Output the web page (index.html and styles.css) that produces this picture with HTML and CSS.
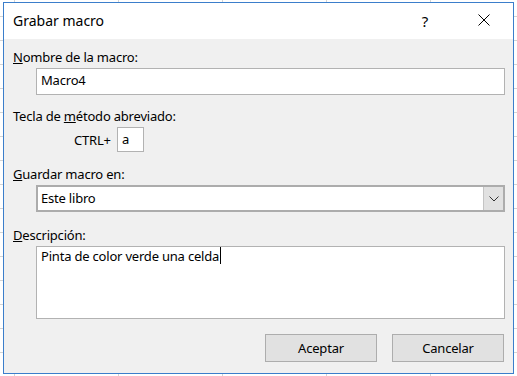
FILE: index.html
```html
<!DOCTYPE html>
<html lang="es">
<head>
  <meta charset="UTF-8">
  <title>Grabar macro</title>
  <link rel="stylesheet" href="styles.css">
</head>
<body>
<div class="dialog">
  <div class="titlebar">
    <span class="title">Grabar macro</span>
    <span class="help">?</span>
    <span class="close">
      <svg width="12" height="12" viewBox="0 0 12 12"><path d="M0.5 0.5 L11.5 11.5 M11.5 0.5 L0.5 11.5" stroke="#000" stroke-width="1" fill="none"/></svg>
    </span>
  </div>

  <div class="content">
    <div class="label lbl-name"><u>N</u>ombre de la macro:</div>
    <div class="field field-name">Macro4</div>

    <div class="label lbl-key">Tecla de <u>m</u>étodo abreviado:</div>
    <div class="shortcut">
      <span class="ctrl">CTRL+</span>
      <div class="field key">a</div>
    </div>

    <div class="label lbl-store"><u>G</u>uardar macro en:</div>
    <div class="combo">
      <span class="combo-value">Este libro</span>
      <span class="combo-btn">
        <svg width="10" height="6" viewBox="0 0 10 6"><polyline points="0.5,0.5 5,5 9.5,0.5" stroke="#333" stroke-width="1" fill="none"/></svg>
      </span>
    </div>

    <div class="label lbl-desc"><u>D</u>escripción:</div>
    <div class="field memo">Pinta de color verde una celda<span class="caret"></span></div>

    <div class="actions">
      <button class="btn">Aceptar</button>
      <button class="btn">Cancelar</button>
    </div>
  </div>
</div>
</body>
</html>
```

FILE: styles.css
```css
* {
  box-sizing: border-box;
}
html, body {
  margin: 0;
  padding: 0;
  width: 517px;
  height: 376px;
  overflow: hidden;
}
body {
  font-family: 'Noto Sans', 'Open Sans', sans-serif;
  font-size: 13px;
  letter-spacing: -0.2px;
  color: #000;
  background-color: #fff;
  background-image:
    linear-gradient(to right, #d4d4d4 1px, transparent 1px),
    linear-gradient(to bottom, #d4d4d4 1px, transparent 1px);
  background-size: 104px 100%, 100% 24px;
  background-position: 14px 0, 0 16px;
}
.dialog {
  margin: 2px 0 0 3px;
  width: 511px;
  height: 372px;
  border: 1px solid #3b7ecb;
  background: #f0f0f0;
  display: flex;
  flex-direction: column;
}
.titlebar {
  height: 36px;
  background: #fff;
  display: flex;
  align-items: center;
  padding-bottom: 1px;
}
.title {
  flex: 1;
  padding-left: 9px;
  font-size: 14px;
  letter-spacing: 0;
}
.help {
  font-size: 15px;
  margin-right: 50px;
}
.close {
  display: flex;
  margin-right: 23px;
  margin-top: -1px;
}
.content {
  flex: 1;
  padding: 9px 8px 0 9px;
  display: flex;
  flex-direction: column;
}
.label {
  line-height: 18px;
}
.label u {
  text-decoration-thickness: 1px;
}
.field {
  background: #fff;
  border: 1px solid #b2b2b2;
  line-height: 23px;
  padding: 0 0 2px 4px;
}
.field-name {
  margin: 2px 0 0 23px;
  height: 27px;
}
.lbl-key {
  margin-top: 12px;
}
.shortcut {
  display: flex;
  align-items: center;
  height: 25px;
  margin-top: 2px;
  padding-left: 61px;
}
.ctrl {
  width: 43px;
}
.key {
  width: 27px;
  height: 25px;
  line-height: 22px;
  padding-left: 4px;
}
.lbl-store {
  margin-top: 13px;
}
.combo {
  margin: 2px 0 0 23px;
  height: 27px;
  border: 2px solid #acacac;
  background: #fff;
  display: flex;
}
.combo-value {
  flex: 1;
  line-height: 22px;
  padding-left: 3px;
}
.combo-btn {
  width: 20px;
  background: #e1e1e1;
  border-left: 1px solid #c4c4c4;
  display: flex;
  align-items: center;
  justify-content: center;
}
.lbl-desc {
  margin-top: 14px;
}
.memo {
  margin: 2px 0 0 23px;
  height: 73px;
  line-height: 18px;
  padding: 0 0 0 4px;
}
.caret {
  display: inline-block;
  width: 1px;
  height: 17px;
  background: #000;
  vertical-align: -3px;
  margin-left: 1px;
}
.actions {
  display: flex;
  justify-content: flex-end;
  gap: 15px;
  margin-top: 15px;
  padding-right: 1px;
}
.btn {
  width: 112px;
  height: 28px;
  background: #e1e1e1;
  border: 1px solid #adadad;
  font-family: inherit;
  font-size: 13px;
  letter-spacing: -0.2px;
  color: #000;
  padding: 0;
}
```
